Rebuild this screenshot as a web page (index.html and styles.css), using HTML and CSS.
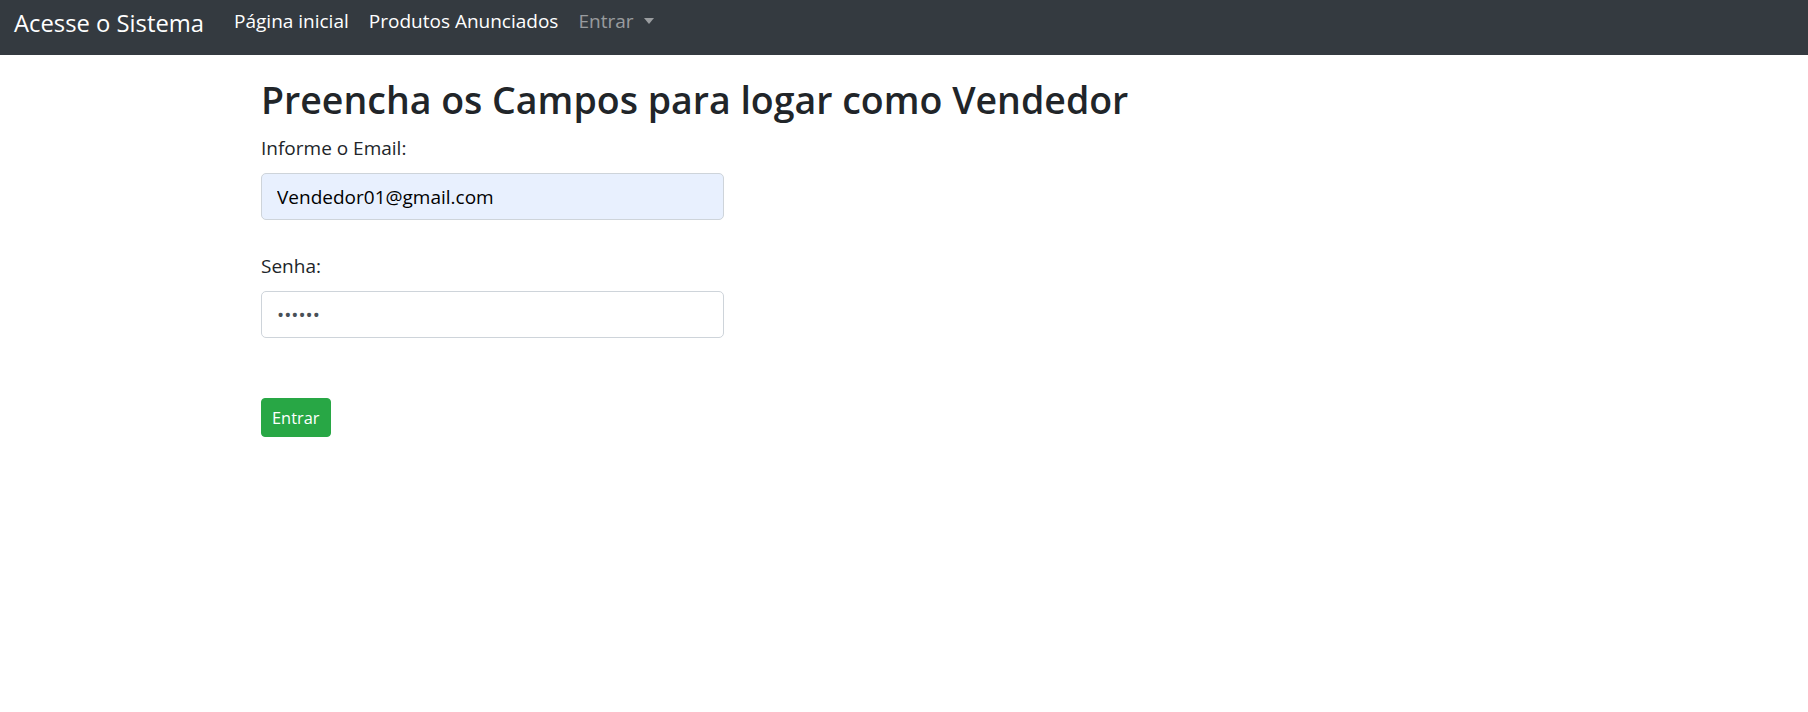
FILE: index.html
```html
<!DOCTYPE html>
<html lang="pt-BR">
<head>
<meta charset="utf-8">
<title>Acesse o Sistema</title>
<link rel="stylesheet" href="styles.css">
</head>
<body>
<nav class="navbar">
  <a class="brand" href="#">Acesse o Sistema</a>
  <ul class="nav">
    <li><a class="nav-link" href="#">Página inicial</a></li>
    <li><a class="nav-link" href="#">Produtos Anunciados</a></li>
    <li><a class="nav-link muted" href="#">Entrar<span class="caret"></span></a></li>
  </ul>
</nav>
<main class="container">
  <h2 class="title">Preencha os Campos para logar como Vendedor</h2>
  <form class="form">
    <div class="form-group">
      <label class="label" for="email">Informe o Email:</label>
      <input class="form-control autofilled" id="email" type="text" value="Vendedor01@gmail.com">
    </div>
    <div class="form-group second">
      <label class="label" for="senha">Senha:</label>
      <input class="form-control" id="senha" type="password" value="123456">
    </div>
    <button class="btn" type="button">Entrar</button>
  </form>
</main>
</body>
</html>
```

FILE: styles.css
```css
* { box-sizing: border-box; }
html, body { margin: 0; padding: 0; }
body {
  font-family: "Open Sans", "Noto Sans", sans-serif;
  color: #212529;
  background: #fff;
}
.navbar {
  display: flex;
  align-items: flex-start;
  height: 55px;
  padding: 0 14px;
  background: #343a40;
}
.brand {
  color: #fff;
  text-decoration: none;
  font-size: 23.8px;
  line-height: 30px;
  padding-top: 7.5px;
  margin-right: 20px;
  white-space: nowrap;
}
.nav {
  display: flex;
  list-style: none;
  margin: 0;
  padding: 0;
}
.nav-link {
  display: block;
  color: #fff;
  text-decoration: none;
  font-size: 19px;
  line-height: 30px;
  padding: 5.5px 10px 0;
  white-space: nowrap;
}
.nav-link.muted { color: rgba(255,255,255,.5); }
.caret {
  display: inline-block;
  vertical-align: 4px;
  margin-left: 10px;
  border-top: 6px solid rgba(255,255,255,.5);
  border-left: 5px solid transparent;
  border-right: 5px solid transparent;
}
.container {
  padding: 20px 0 0 261px;
}
.title {
  margin: 0 0 9px;
  padding-top: 1px;
  font-size: 37.5px;
  line-height: 48px;
  font-weight: 600;
}
.form { width: 463px; }
.form-group { margin-bottom: 31px; }
.form-group.second { margin-bottom: 60px; }
.label {
  display: block;
  font-size: 19px;
  line-height: 30px;
  margin-bottom: 10px;
}
.form-control {
  display: block;
  width: 100%;
  height: 47px;
  padding: 0 15px;
  font-family: inherit;
  font-size: 19px;
  color: #495057;
  background: #fff;
  border: 1px solid #ced4da;
  border-radius: 5px;
  outline: none;
}
.form-control.autofilled {
  background: #e8f0fe;
  color: #000;
}
.btn {
  display: block;
  height: 39px;
  padding: 0 10px;
  font-family: inherit;
  font-size: 16.4px;
  line-height: 37px;
  color: #fff;
  background: #28a745;
  border: 1px solid #28a745;
  border-radius: 4px;
}
```
